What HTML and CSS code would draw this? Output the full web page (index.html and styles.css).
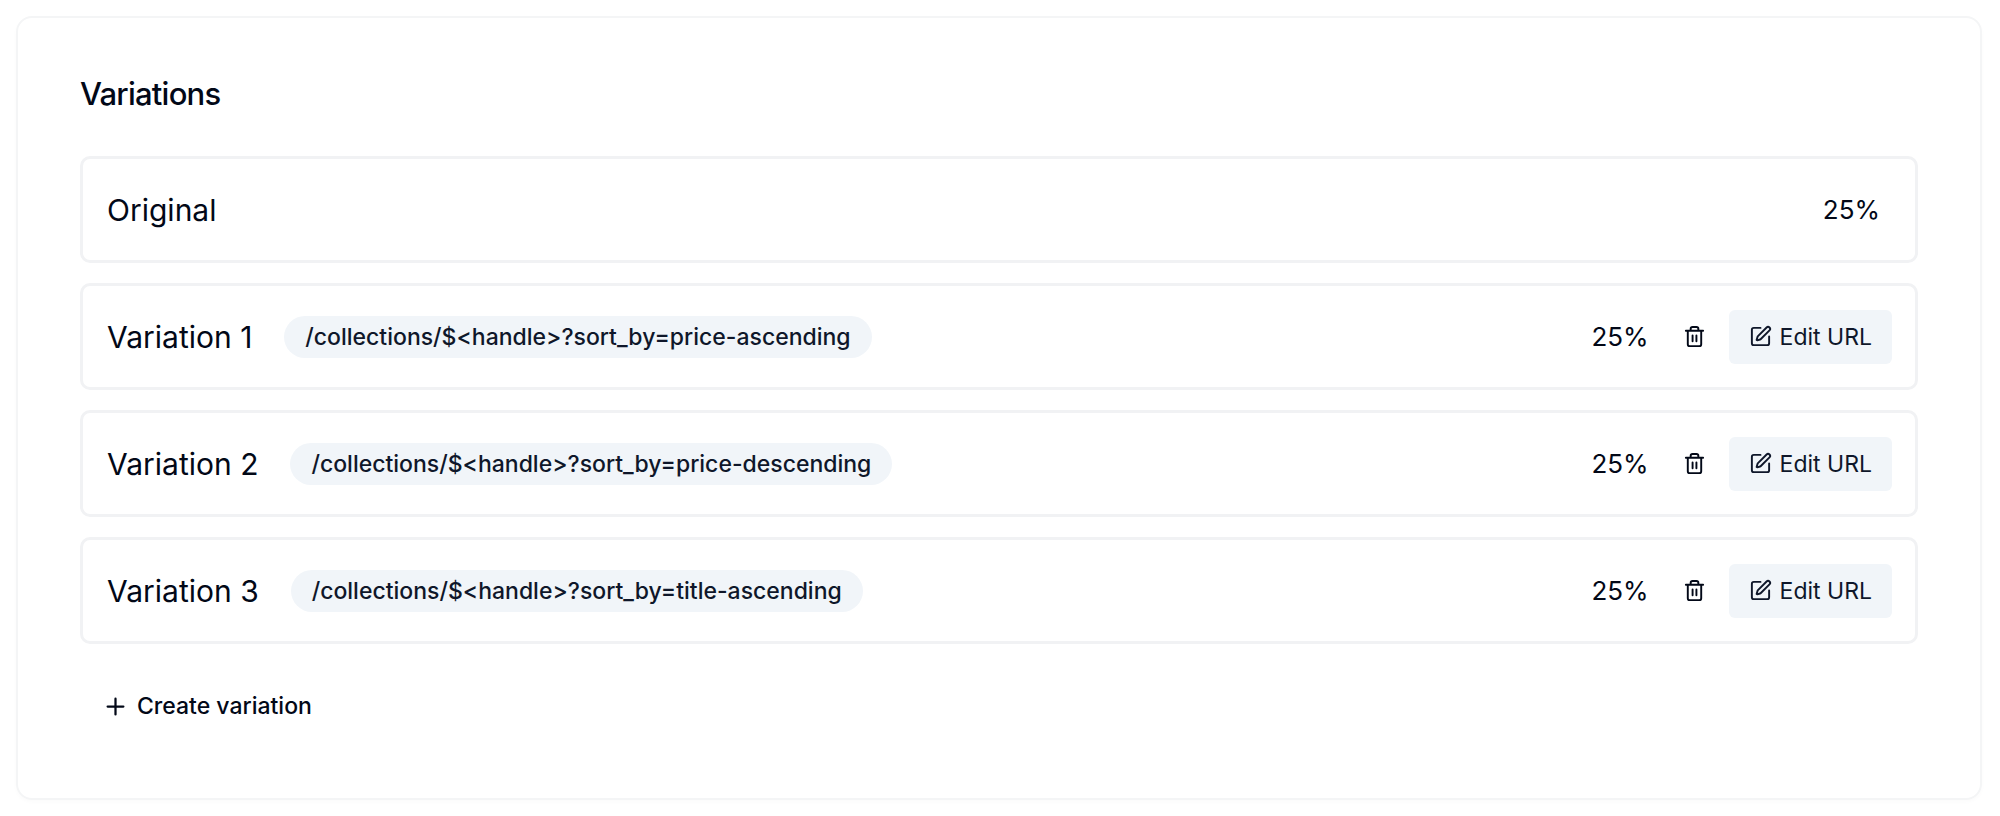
FILE: index.html
```html
<!DOCTYPE html>
<html lang="en">
<head>
    <meta charset="UTF-8">
    <meta name="viewport" content="width=device-width, initial-scale=1.0">
    <title>Variations</title>
    <link rel="stylesheet" href="styles.css">
</head>
<body>
    <!-- Shared icons -->
    <svg class="icon-defs" aria-hidden="true">
        <symbol id="trash" viewBox="0 0 24 24">
            <path d="M3 6h18M19 6v14c0 1-1 2-2 2H7c-1 0-2-1-2-2V6M8 6V4c0-1 1-2 2-2h4c1 0 2 1 2 2v2M10 11v6M14 11v6"/>
        </symbol>
        <symbol id="edit" viewBox="0 0 24 24">
            <path d="M12 3H5a2 2 0 0 0-2 2v14a2 2 0 0 0 2 2h14a2 2 0 0 0 2-2v-7"/>
            <path d="M18.375 2.625a1 1 0 0 1 3 3l-9.013 9.014a2 2 0 0 1-.853.505l-2.873.84a.5.5 0 0 1-.62-.62l.84-2.873a2 2 0 0 1 .506-.852z"/>
        </symbol>
        <symbol id="plus" viewBox="0 0 24 24">
            <path d="M5 12h14M12 5v14"/>
        </symbol>
    </svg>

    <main class="card">
        <h1>Variations</h1>

        <ul class="variations">
            <li class="variation">
                <span class="name">Original</span>
                <span class="percent">25%</span>
            </li>
            <li class="variation">
                <span class="name">Variation 1</span>
                <span class="badge">/collections/$&lt;handle&gt;?sort_by=price-ascending</span>
                <span class="percent">25%</span>
                <button class="delete-btn" type="button" aria-label="Delete Variation 1"><svg class="icon"><use href="#trash"/></svg></button>
                <button class="edit-btn" type="button"><svg class="icon"><use href="#edit"/></svg>Edit URL</button>
            </li>
            <li class="variation">
                <span class="name">Variation 2</span>
                <span class="badge">/collections/$&lt;handle&gt;?sort_by=price-descending</span>
                <span class="percent">25%</span>
                <button class="delete-btn" type="button" aria-label="Delete Variation 2"><svg class="icon"><use href="#trash"/></svg></button>
                <button class="edit-btn" type="button"><svg class="icon"><use href="#edit"/></svg>Edit URL</button>
            </li>
            <li class="variation">
                <span class="name">Variation 3</span>
                <span class="badge">/collections/$&lt;handle&gt;?sort_by=title-ascending</span>
                <span class="percent">25%</span>
                <button class="delete-btn" type="button" aria-label="Delete Variation 3"><svg class="icon"><use href="#trash"/></svg></button>
                <button class="edit-btn" type="button"><svg class="icon"><use href="#edit"/></svg>Edit URL</button>
            </li>
        </ul>

        <button class="create-btn" type="button"><svg class="icon plus"><use href="#plus"/></svg>Create variation</button>
    </main>
</body>
</html>
```

FILE: styles.css
```css
* {
    margin: 0;
    padding: 0;
    box-sizing: border-box;
}

body {
    background-color: #fff;
    color: #020817;
    font-family: Inter, sans-serif;
    padding: 16px 18px 16px 16px;
}

button {
    display: flex;
    align-items: center;
    border: none;
    background: none;
    color: inherit;
    font-family: inherit;
    cursor: pointer;
}

.icon-defs {
    position: absolute;
    width: 0;
    height: 0;
}

.icon {
    width: 23px;
    height: 23px;
    fill: none;
    stroke: currentColor;
    stroke-width: 2;
    stroke-linecap: round;
    stroke-linejoin: round;
}

.icon.plus {
    width: 27px;
    height: 27px;
}

.card {
    border: 2px solid #f4f5f6;
    border-radius: 16px;
    padding: 60px 62px 65px;
    box-shadow: 0 2px 4px rgba(0, 0, 0, 0.02);
}

h1 {
    font-size: 31px;
    font-weight: 500;
    line-height: 32px;
    letter-spacing: -0.025em;
    margin-bottom: 46px;
}

.variations {
    display: flex;
    flex-direction: column;
    gap: 20px;
    list-style: none;
}

.variation {
    display: flex;
    align-items: center;
    min-height: 107px;
    padding: 0 23px 0 24px;
    border: 3px solid #f1f2f4;
    border-radius: 10px;
}

.name {
    font-size: 30px;
    line-height: 40px;
}

.badge {
    margin-left: 32px;
    padding: 0 21px;
    border-radius: 21px;
    background-color: #f1f5f9;
    color: #0f172a;
    font-size: 23px;
    font-weight: 500;
    line-height: 42px;
}

.percent {
    margin-left: auto;
    padding-right: 12px;
    font-size: 26px;
    line-height: 40px;
}

.delete-btn {
    padding: 12px 23px 12px 22px;
}

.edit-btn {
    gap: 8px;
    height: 54px;
    padding: 0 20px;
    border-radius: 6px;
    background-color: #f1f5f9;
    color: #0f172a;
    font-size: 23px;
}

.create-btn {
    gap: 8px;
    height: 54px;
    margin-top: 35px;
    padding: 0 22px;
    font-size: 23px;
    font-weight: 500;
}
```
